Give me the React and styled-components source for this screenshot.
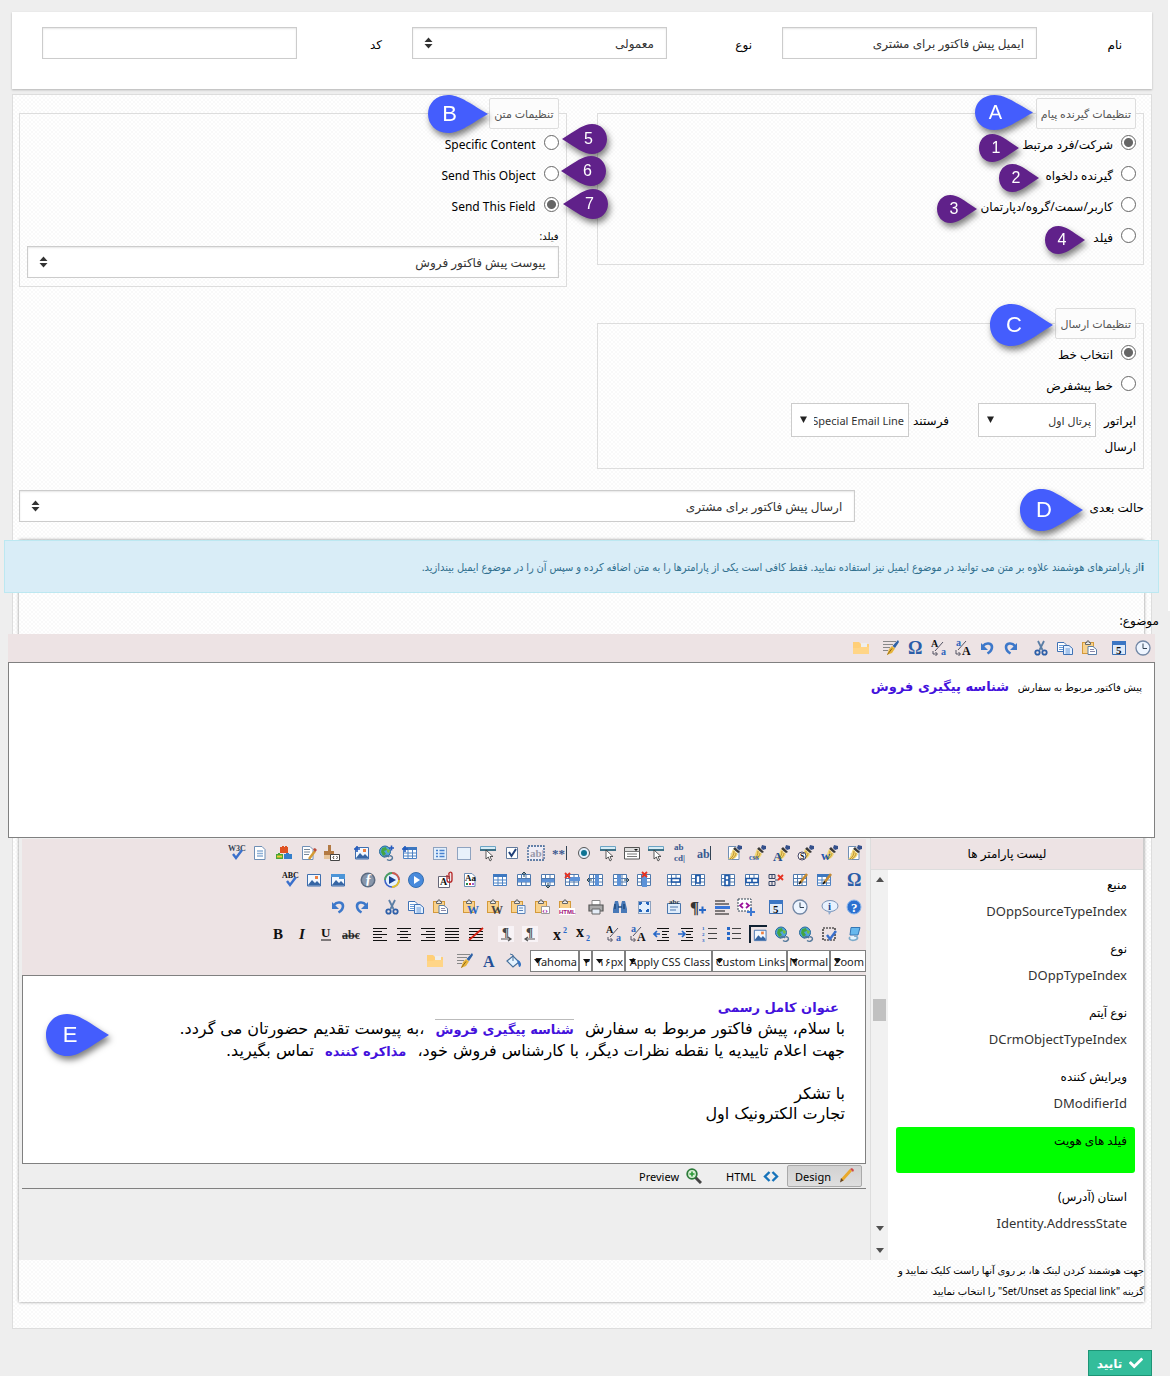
import React from "react";
import styled, { createGlobalStyle } from "styled-components";
import { FaCheck } from "react-icons/fa";

const UI = '"Noto Sans", "DejaVu Sans", sans-serif';
const NARROW = '"Noto Sans", "DejaVu Sans Condensed", "DejaVu Sans", sans-serif';
const DOC = '"DejaVu Sans", sans-serif';

const GlobalStyle = createGlobalStyle`
  *, *::before, *::after { box-sizing: border-box; }
  body { margin: 0; background: #fff; font-family: ${UI}; font-size: 12px; color: #000; }
  input, select, button { font-family: inherit; }
`;

const Page = styled.main`
  direction: rtl;
  padding: 12px 18px 0 12px;
  background: linear-gradient(#fff, #fff) right top / 2px 611px no-repeat, #eee;
`;

const TopCard = styled.section`
  display: grid;
  grid-template-columns: repeat(3, 1fr);
  padding: 15px 15px 30px;
  background: #fff;
  box-shadow: 0 1px 2px rgba(0, 0, 0, 0.25);
`;

const Field = styled.div`
  display: grid;
  grid-template-columns: 1fr 3fr;
  align-items: center;
  padding: 0 15px;
`;

const Label = styled.label`
  padding-top: 4px;
  font-size: 12px;
  line-height: 20px;
  color: #000;
`;

const TextBox = styled.input`
  width: 100%;
  height: 32px;
  padding: 0 12px;
  border: 1px solid #ccc;
  background: #fff;
  box-shadow: inset 0 1px 2px rgba(0, 0, 0, 0.1);
  color: #333;
  font-size: 12px;
`;

const SelectWrap = styled.div`
  position: relative;
  width: 100%;
  svg { position: absolute; left: ${(p) => (p.$plain ? 8 : 12)}px; top: 50%; margin-top: -6px; pointer-events: none; }
`;

const SelectBox = styled.select`
  appearance: none;
  display: block;
  width: 100%;
  height: ${(p) => (p.$plain ? 34 : 32)}px;
  padding: ${(p) => (p.$plain ? "0 4px 0 22px" : "0 12px 0 30px")};
  border: 1px solid #ccc;
  border-radius: 0;
  background: #fff;
  box-shadow: ${(p) => (p.$plain ? "none" : "inset 0 1px 2px rgba(0, 0, 0, 0.1)")};
  color: #333;
  font-size: ${(p) => (p.$plain ? 11 : 12)}px;
`;

const Panel = styled.section`
  margin-top: 5px;
  padding: 3px 7px 26px 6px;
  border: 1px solid #ddd;
  background: conic-gradient(#f9f9f9 25%, #fff 0 50%, #f9f9f9 0 75%, #fff 0) 0 0 / 4px 4px;
`;

const Columns = styled.div`
  display: grid;
  grid-template-columns: 1fr 1fr;
  align-items: start;
  gap: 21px 30px;
`;

const Group = styled.fieldset`
  position: relative;
  min-width: 0;
  margin: 0;
  padding: 0 7px ${(p) => p.$bottom || 8}px;
  border: 1px solid #ddd;
`;

const Legend = styled.legend`
  height: 31px;
  padding: 0 4px;
  border: 1px solid #ddd;
  border-radius: 2px;
  background: #fcfcfc;
  color: #555;
  font-size: 11px;
  line-height: 30px;
`;

const Choice = styled.label`
  display: flex;
  align-items: center;
  gap: 8px;
  height: 27px;
  margin-bottom: 4px;
  font-size: 12px;
  color: #000;
  span { padding-top: 4px; }
`;

const Radio = styled.input`
  appearance: none;
  width: 15px;
  height: 15px;
  margin: 0;
  border: 1px solid #666;
  border-radius: 50%;
  background: #fff;
  &:checked { background: radial-gradient(circle, #666 0 4px, #fff 5px); }
`;

const FieldLabel = styled.label`
  display: block;
  margin-top: 8px;
  font-size: 10px;
  line-height: 20px;
`;

const LineGrid = styled.div`
  display: flex;
  align-items: flex-start;
  margin-top: 6px;
`;

const LineField = styled.div`
  display: grid;
  grid-template-columns: 40px 118px;
  align-items: start;
  margin-left: 29px;
`;

const LineLabel = styled.label`
  padding-top: 5px;
  font-size: 12px;
  line-height: 26px;
`;

const NextState = styled.div`
  position: relative;
  display: grid;
  grid-template-columns: 1fr 3fr;
  align-items: center;
  gap: 10px;
  margin-top: 21px;
`;

const Marker = styled.span`
  position: absolute;
  z-index: 2;
  top: ${(p) => p.$top}px;
  ${(p) => (p.$left !== undefined ? `left: ${p.$left}px;` : `right: ${p.$right}px;`)}
  width: ${(p) => p.$w}px;
  height: ${(p) => p.$h}px;
  direction: ltr;
  color: #fff;
  font: ${(p) => p.$font}px "Liberation Sans", Roboto, sans-serif;
  filter: drop-shadow(2px 4px 3px rgba(0, 0, 0, 0.5));
  svg { position: absolute; inset: 0; width: 100%; height: 100%; }
  b {
    position: absolute;
    top: 0;
    ${(p) => (p.$flip ? "right: 0;" : "left: 0;")}
    width: ${(p) => p.$h + 6}px;
    line-height: ${(p) => p.$h}px;
    text-align: center;
    font-weight: 400;
  }
`;

const MessageBox = styled.section`
  margin-top: 18px;
  box-shadow: 0 0 3px rgba(0, 0, 0, 0.45);
`;

const Notice = styled.p`
  margin: 0 -15px;
  height: 53px;
  padding: 0 14px;
  border: 1px solid #bce8f1;
  background: #d9edf7;
  color: #31708f;
  font-family: ${NARROW};
  font-size: 11px;
  line-height: 51px;
  white-space: nowrap;
`;

const Subject = styled.div`
  margin: 0 -11px;
`;

const SubjectLabel = styled.div`
  margin-right: -4px;
  padding: 18px 0 3px;
  font-size: 12px;
  line-height: 20px;
`;

const Tools = styled.div`
  background: #ede3e4;
`;

const ToolRow = styled.div`
  display: flex;
  align-items: center;
  height: ${(p) => p.$h || 27}px;
`;

const ToolButton = styled.button`
  display: flex;
  align-items: center;
  justify-content: center;
  width: 24px;
  height: 24px;
  margin: 0 0 0 ${(p) => (p.$last ? 6 : 0)}px;
  padding: 0;
  border: 0;
  background: none;
  direction: ltr;
  svg { display: block; width: 16px; height: 16px; overflow: visible; }
`;

const SubjectArea = styled.div`
  height: 176px;
  padding: 13px 12px;
  border: 1px solid #808080;
  background: #fff;
  font-size: 10px;
  line-height: 22px;
`;

const Tag = styled.strong`
  display: inline-block;
  margin: 0 6px;
  color: #4412dc;
  font: bold 13px/20px ${DOC};
  ${(p) => p.$ruled && "border-top: 1px solid #bbb;"}
`;

const Workspace = styled.div`
  display: flex;
  height: 422px;
  background: #eee;
`;

const Params = styled.aside`
  flex: 0 0 274px;
  display: flex;
  flex-direction: column;
  border-left: 1px solid #ddd;
  border-right: 1px solid #ccc;
`;

const ParamsHead = styled.h2`
  margin: 1px 0 0;
  border-bottom: 1px solid #ddd;
  background: #ede3e4;
  font-size: 12px;
  font-weight: 400;
  line-height: 30px;
  text-align: center;
`;

const ParamsBody = styled.div`
  flex: 1;
  display: flex;
  background: #fff;
`;

const ParamList = styled.ul`
  flex: 1;
  margin: 0;
  padding: 1px 8px 0;
  list-style: none;
`;

const Param = styled.li`
  height: ${(p) => (p.$heading ? 46 : 52)}px;
  margin-bottom: ${(p) => (p.$heading ? 10 : 12)}px;
  padding: 0 8px;
  border-radius: 3px;
  background: ${(p) => (p.$heading ? "#0f0" : "transparent")};
  h3 { margin: 0; font-size: 12px; font-weight: 400; line-height: 28px; }
  code { display: block; color: #333; font-family: ${UI}; font-size: 13px; line-height: 24px; }
`;

const Track = styled.div`
  flex: 0 0 17px;
  display: flex;
  flex-direction: column;
  align-items: center;
  padding: 7px 0;
  background: #f1f1f1;
  svg { display: block; }
`;

const Thumb = styled.span`
  width: 13px;
  height: 22px;
  margin: 117px 0 auto;
  background: #c1c1c1;
`;

const Gap = styled.span`
  height: 17px;
`;

const Editor = styled.div`
  position: relative;
  flex: 1;
  min-width: 0;
  padding: 1px 4px 0 3px;
`;

const MiniWrap = styled.div`
  position: relative;
  width: ${(p) => p.$w}px;
  svg { position: absolute; left: 4px; top: 8px; pointer-events: none; }
`;

const MiniSelect = styled.select`
  appearance: none;
  display: block;
  width: 100%;
  height: 22px;
  padding: 0 1px;
  border: 1px solid #808080;
  border-radius: 0;
  background: #fff;
  color: #222;
  font-size: 11px;
`;

const Spacer = styled.span`
  width: 5px;
`;

const Doc = styled.div`
  height: 189px;
  padding: 20px;
  border: 1px solid #808080;
  background: #fff;
  font-family: ${DOC};
  font-size: 16px;
`;

const Line = styled.p`
  margin: 0;
  height: ${(p) => (p.$tight ? 20 : 22)}px;
  line-height: ${(p) => (p.$tight ? 20 : 22)}px;
  white-space: nowrap;
`;

const DocGap = styled.div`
  height: 22px;
`;

const Modes = styled.div`
  display: flex;
  align-items: center;
  height: 25px;
  padding-right: 4px;
  border-bottom: 1px solid #808080;
`;

const Mode = styled.button`
  display: flex;
  align-items: center;
  gap: 7px;
  height: 22px;
  margin: 0 0 0 ${(p) => (p.$on ? 0 : 8)}px;
  padding: 0 7px;
  border: 1px solid ${(p) => (p.$on ? "#aaa" : "transparent")};
  border-radius: 2px;
  background: ${(p) => (p.$on ? "linear-gradient(#d2d2d2, #dedede)" : "none")};
  color: #000;
  font-size: 11px;
`;

const Hint = styled.p`
  width: 252px;
  margin: 0;
  font-size: 10px;
  line-height: 21px;
`;

const Submit = styled.button`
  display: flex;
  align-items: center;
  justify-content: center;
  gap: 7px;
  width: 64px;
  height: 26px;
  margin: 21px 0 0;
  padding: 0;
  border: 1px solid #1d9576;
  background: #33bd9b;
  color: #fff;
  font-size: 12px;
  font-weight: 700;
`;

/* ---------- drawings ---------- */
const N = "#2d5a94";
const B = "#5c92d8";
const K = "#111";
const S = (d, c = N, w = 1, f = "none") => <path d={d} stroke={c} strokeWidth={w} fill={f} />;
const F = (d, c = N) => <path d={d} fill={c} />;
const T = (t, x, y, s, c = K, extra = {}) => (
  <text x={x} y={y} fontSize={s} fill={c} fontFamily="Liberation Serif, serif" {...extra}>{t}</text>
);
const bold = { fontWeight: 700 };
const G = (...kids) => <>{kids.map((k, i) => <React.Fragment key={i}>{k}</React.Fragment>)}</>;

const grid = () => S("M1.500 2.500H14.500V13.500H1.500ZM1.500 6.500H14.500M1.500 10H14.500M5.500 3V14M10 3V14", "#4f79ad", 1, "#fff");
const table = () => G(S("M1.500 2.500H14.500V13.500H1.500ZM1.500 8H14.500M1.500 11H14.500M6 5V13.500M10.500 5V13.500", "#4f83c4", 1, "#fff"), F("M1 2H15V5H1Z", "#3e78c0"));
const page = () => S("M2.500 1.500H10L13 4.500V14.500H2.500Z", "#6f8fb5", 1, "#fff");
const clip = () => G(F("M1 2H13V14H1Z", "#d49a3a"), F("M2 3H12V13H2Z", "#f9d28c"), S("M4.500 4.500V2.500H6V1H8V2.500H9.500V4.500Z", "#666", 1, "#eee"));
const picture = () => G(S("M1.500 2.500H14.500V14H1.500Z", "#3f6fae", 1, "#f2f8ff"), F("M2 13L6 8L9 11L11 9L14 12V13.500H2Z", "#3766a4"), F("M9 4H12V7H9Z", "#f08040"));
const globe = () => G(<circle cx="7" cy="6.500" r="5.500" fill="#4fa3dd" stroke="#256a9b" />, F("M4 3L8 2L9 5L6 6L8 9L5 11L3 7Z", "#45a543"), F("M9 4L12 5L11 8L9 7Z", "#70bf45"), S("M6 12.500C7 9.500 10 10.500 11 12M9 14.500C11 16 14 15.500 14.500 13C14.500 11 12.500 10.500 11.500 11", "#54789b", 1.400));
const brush = () => G(
  F("M12 0L16 1L16 4L13 5L11 3Z", "#34508c"),
  F("M9 2L14 7L12 8L7 4Z", "#3a3a3a"),
  F("M7 4L12 9C10 14 6 15 2 14C5 12 5 8 7 4Z", "#f1d778"),
  S("M8 6C8 9 7 12 4 14M10 8C10 10 8 13 6 14", "#b98a24", 0.900)
);
const pen = () => G(F("M15 0L16 2L12 8L9.500 6Z", "#2f62a6"), F("M9 6L12 8.500L9 13L4 15L6 9Z", "#e8b53b"), S("M9 8.500L4.500 14.500", "#825d13", 0.900));
const star = () => S("M0 4H6M3 1V7", "#2359bd", 1.600);
const cursor = () => G(S("M.5 1.500H15.500V5.500H.5Z", "#6ca4c5", 1, "#d8edf6"), F("M0 4H16V6H0Z", "#3f7186"), S("M6 5L6 14L8.300 12L10 16L11.500 15L10 11.500H13Z", "#333", 0.800, "#fff"));
const cross = () => S("M1 1L6 6M6 1L1 6", "#e63222", 1.800);
const lines = (xs, c = K) => S(xs, c, 1.100);
const check = () => S("M5 9L8 13L14 5", "#3a70cc", 2.400);
const undo = () => G(S("M4 6C7 2 13 3 13 7C13 10 11 12 8.500 13.500", "#3d78ca", 2.600), F("M2 3V10H9Z", "#3d78ca"));
const redo = () => <g transform="matrix(-1 0 0 1 16 0)">{undo()}</g>;
const omega = () => T("Ω", 1, 14, 18, "#2b5da8", bold);
const swap1 = () => G(T("A", 0, 7, 10, K, bold), T("a", 10, 15, 10, "#2d66bd", bold), S("M12 2L4 11M2 11V14H6M4.500 12L6.500 14L4.500 16", "#445", 0.900));
const swap2 = () => G(T("a", 1, 6, 10, "#2d66bd", bold), T("A", 7, 15, 12, K, bold), S("M11 1L3 10M1 10V14H5M3.500 12L5.500 14L3.500 16", "#445", 0.900));
const cut = () => G(S("M5 1L9.500 10M11 1L6.500 10", "#5b7ea5", 1.800), <circle cx="4.500" cy="12.500" r="2.200" fill="none" stroke="#2d5fa8" strokeWidth="1.800" />, <circle cx="11.500" cy="12.500" r="2.200" fill="none" stroke="#2d5fa8" strokeWidth="1.800" />);
const copy = () => G(S("M.5 2.500H7L9 4.500V11.500H.5Z", "#3f72b5", 1, "#fff"), S("M6.500 5.500H12L15.500 8.500V14.500H6.500Z", "#3f72b5", 1, "#e4f0ff"), S("M2 5.500H6M2 7.500H6M2 9.500H6M8.500 9H13M8.500 11H13M8.500 13H13", "#6a9bd8"));
const paste = () => G(clip(), S("M7 6.500H12L15.500 9.500V14.500H7Z", "#5a7fa8", 1, "#fff"), S("M9 9.500H13M9 11.500H14", "#88a"));
const clock = () => G(<circle cx="8" cy="8" r="7" fill="#eef5ff" stroke="#7287a5" strokeWidth="1.300" />, S("M8 3.500V8.500H12", "#345", 1));
const cal = () => G(S("M1.500 1.500H14.500V14.500H1.500Z", "#3b6fb3", 1, "#dfeaf8"), F("M1 1H15V5H1Z", "#3b76c4"), T("5", 5, 14, 11, K, bold));
const folder = () => G(F("M0 2H6L8 4H16V14H0Z", "#ffcf78"), F("M8 3H14V8H8Z", "#eee"), F("M0 8H6L8 7H16V14H0Z", "#ffd587"));
const format = () => G(S("M0 1.500H13M0 4.500H10M0 7.500H7M0 10.500H5", "#888"), pen());
const para = (d) => G(F("M0 0H16V16H0Z", "#f8f3f6"), T("¶", 4, 10, 13, "#444", bold), S(d, "#555", 1.200));
const tableMark = (d, c = "#2e68b8") => G(grid(), F(d, c));

const ICONS = {
  omega, undo, redo, cut, copy, paste, clock, cal, folder, format, swap1, swap2, pic: picture, table,
  w3c: () => G(T("W3C", 0, 6, 8, "#345", bold), check()),
  spell: () => G(T("ABC", 0, 6, 8, K, bold), check()),
  sheet: () => G(page(), S("M5 6H11M5 8.500H11M5 11H11", "#8eb0d5", 1.300)),
  modules: () => G(F("M4 2H6V1H8V2H9V1H11V2H12V8H4Z", "#df5222"), F("M0 9H2V8H4V9H7V14H0Z", "#49a637"), F("M8 9H10V8H13V9H16V14H8Z", "#347fcb"), S("M1 11.500H6", "#f3ca35", 2)),
  edit: () => G(page(), S("M4 4.500H10M4 7H10M4 9.500H9", "#789"), S("M15 6L9 14", "#d49b35", 2.500), F("M13 4L15 3L17 5L15 7Z", "#bb4b3a")),
  stamp: () => G(F("M4 0H7V6H10V10H0V6H4Z", "#b37a43"), F("M0 10H10V14H0Z", "#e6c49a"), S("M6.500 9.500H15.500V15.500H6.500ZM10 11L9 12.500L10 14M12.500 11L13.500 12.500L12.500 14", "#444", 1, "#fff")),
  picAdd: () => G(picture(), star()),
  globeAdd: () => G(globe(), S("M11 3H16M13.500 0.500V5.500", "#2359bd", 1.600)),
  tableAdd: () => G(table(), star()),
  formSet: () => G(<rect x="1.500" y="2.500" width="13" height="12" fill="#e2effc" stroke="#345d90" strokeDasharray="1 1" />, S("M4 5.500H6M4 8.500H6M4 11.500H6M7.500 5.500H12.500M7.500 8.500H12.500M7.500 11.500H12.500", "#4781ce", 1.500)),
  area: () => <rect x="1.500" y="2.500" width="13" height="12" fill="#e8f1fb" stroke="#345d90" strokeDasharray="1 1" />,
  cursor,
  checkbox: () => G(S("M2.500 2.500H13.500V13.500H2.500Z", "#627a9c", 1, "#fff"), S("M5 7L7.500 11L12 4", "#203f78", 2)),
  dashedText: () => G(<rect x="0" y="1" width="16" height="14" fill="#f0edf5" stroke="#345d90" strokeWidth="1.300" strokeDasharray="2 1" />, T("ab|", 2, 12, 11, "#99a", bold)),
  password: () => G(T("**", 0, 13, 13, "#3b5990", bold), S("M14.500 1V15", "#345")),
  radio: () => G(<circle cx="8" cy="8" r="5.500" fill="#e5f2ff" stroke="#555" />, <circle cx="8" cy="8" r="3" fill="#0f7494" />),
  list: () => G(S("M.5 2.500H15.500V14H.5Z", "#555", 1, "#fff"), F("M1 3H15V6H1Z", "#ddd"), S("M.5 6.500H15.500M3 9H13M3 11.500H13", "#777"), F("M10 4H14L12 6Z", K)),
  abcd: () => G(T("ab", 2, 5, 9, "#3b5990", bold), T("cd|", 2, 16, 9, "#3b5990", bold)),
  ab: () => G(T("ab", 1, 13, 12, "#3b5990", bold), S("M14.500 1V15", "#345")),
  br1: () => G(page(), S("M4.500 9H10M4.500 11.500H10", "#9ab"), brush()),
  br2: () => G(brush(), T("css", -1, 15, 8, "#345fae", bold)),
  br3: () => G(brush(), T("A", -1, 16, 13, "#274f91", bold)),
  br4: () => G(brush(), <circle cx="4" cy="11" r="4" fill="#fff" stroke="#446" />, T("S", 2, 14, 8, K, bold)),
  br5: () => G(brush(), T("w", -1, 15, 13, "#1e55ae", bold)),
  picMap: () => G(picture(), F("M1 2H15V7H9V5H1Z", "#4c95d8")),
  flash: () => G(<circle cx="8" cy="8" r="7.500" fill="#5c6b80" />, <circle cx="8" cy="8" r="6" fill="#8896aa" />, T("ƒ", 5, 12, 14, "#fff", bold)),
  media: () => G(<circle cx="8" cy="8" r="7" fill="#e5f2ff" stroke="#3c62c8" strokeWidth="1.600" />, S("M8 1A7 7 0 0 1 15 8", "#d05d4b", 1.800), S("M15 8A7 7 0 0 1 8 15", "#e6c228", 1.800), S("M1 8A7 7 0 0 1 8 1", "#4ca05a", 1.800), F("M5 4L12 8L5 12Z", "#173f90")),
  play: () => G(<circle cx="8" cy="8" r="7.500" fill="#488adc" stroke="#366fb1" />, F("M6 4L12 8L6 12Z", "#fff")),
  attach: () => G(S("M.5 4.500H11.500V15.500H.5Z", "#667", 1, "#fff"), T("A", 2, 13, 10, K, bold), S("M9 3V8C9 11 14 11 14 8V2C14-1 10 0 11 3V7", "#b52323", 1.300)),
  aa: () => G(page(), T("Aa", 3, 9, 9, K, bold), F("M4 11H6V13H4Z", "#258a46"), F("M7 11H9V13H7Z", "#c33"), F("M10 11H12V13H10Z", "#a25bd1")),
  rowUp: () => G(tableMark("M2 7H14V10H2Z", B), S("M8 0V5M6 2L8 0L10 2", "#245")),
  rowDown: () => G(tableMark("M2 7H14V10H2Z", B), S("M8 11V16M6 14L8 16L10 14", "#245")),
  rowDel: () => G(tableMark("M5 5H16V9H5Z", B), cross()),
  colL: () => G(tableMark("M7 3H11V14H7Z", B), S("M4 8H-1M1 6L-1 8L1 10", "#245")),
  colR: () => G(tableMark("M5 3H9V14H5Z", B), S("M12 8H17M15 6L17 8L15 10", "#245")),
  colDel: () => G(tableMark("M6 4H11V15H6Z", B), <g transform="translate(5 -1)">{cross()}</g>),
  cellA: () => G(grid(), S("M5.500 6.500H14V10H5.500Z", "#1d57a6", 1.600, "#fff")),
  cellB: () => G(grid(), S("M6 3.500H10V11H6Z", "#1d57a6", 1.600, "#fff")),
  cellC: () => G(grid(), S("M5 3.500H9V13.500H5ZM5 8H9", "#1d57a6", 1.600, "#fff")),
  cellD: () => G(grid(), S("M2 6.500H14V10.500H2ZM8 6V10", "#1d57a6", 1.600, "#fff")),
  cellDel: () => G(S("M1 2.500H7V6.500H1ZM1 9.500H7V13.500H1ZM7 8H10M4 2V6M4 9V13", "#346"), <g transform="translate(9 2)">{cross()}</g>),
  gridPen: () => G(grid(), S("M15 2L8 11", "#c58a32", 2.600), S("M9 9.500L7 12", K, 1.500)),
  tablePen: () => G(table(), S("M15 2L8 11", "#c58a32", 2.600), S("M9 9.500L7 12", K, 1.500)),
  pasteW: () => G(clip(), T("W", 5, 15, 12, "#2866c4", bold)),
  pasteK: () => G(clip(), T("W", 5, 15, 12, "#444", bold)),
  pasteT: () => G(clip(), S("M7.500 6.500H15V14.500H7.500ZM9 9H13M9 11.500H13", "#5b83b8", 1, "#eef6ff")),
  pasteC: () => G(clip(), S("M7.500 7.500H15.500V14.500H7.500Z", "#999", 1, "#fff"), T("‹›", 8, 14, 9, "#a020a0", bold)),
  pasteH: () => G(clip(), F("M1 9H17V16H1Z", "#fff"), T("HTML", 1, 15, 6, "#a00f78", { fontWeight: 700, fontFamily: "Liberation Sans" })),
  print: () => G(S("M4 1.500H12V6H4Z", "#888", 1, "#fff"), S("M1 6H15V12H1Z", "#555", 1.200, "#aaa"), S("M4 10H12V15H4Z", "#666", 1, "#e5edf7")),
  find: () => G(F("M3 2H6L7 6L7 14H1V10Z", "#4879b8"), F("M10 2H13L15 10V14H9V6Z", "#4879b8"), S("M3 5V10M12 5V10M6 8H10", "#234d80", 1.600)),
  full: () => G(<rect x="2.500" y="2.500" width="12" height="12" fill="#e2effc" stroke="#345d90" strokeDasharray="1 1" />, S("M4 6V4H6M10 4H12V6M12 10V12H10M6 12H4V10", "#2263bb", 2)),
  note: () => G(S("M1.500 4.500H14.500V14.500H1.500ZM4 8H12M4 11H10", "#4a76ad", 1, "#e0edfb"), T("abc", 3, 5, 7, "#234", bold)),
  paraAdd: () => G(T("¶", 0, 14, 17, "#333", bold), S("M9 11H16M12.500 7.500V14.500", "#2768c8", 2)),
  hr: () => G(lines("M1 2H11M1 5H15M1 12H11M1 15H15"), S("M1 8.500H16", "#3a76d8", 3)),
  code: () => G(<rect x="0" y="0" width="13" height="12" fill="#fff" stroke="#345" strokeDasharray="2 1" />, S("M5 4L2 6.500L5 9M8 4L11 6.500L8 9", "#9b149b", 1.700), S("M9 13H17M13 9V17", "#3d78d2", 2)),
  info: () => G(<ellipse cx="8" cy="7" rx="8" ry="5.500" fill="#e8f2ff" stroke="#7992b5" />, F("M6 12L7 16L10 12Z", "#8fa9cc"), T("i", 6, 11, 11, "#234c92", bold)),
  help: () => G(<circle cx="8" cy="8" r="7" fill="#2b70d0" stroke="#8eb8ec" />, T("?", 5, 13, 13, "#fff", bold)),
  b: () => T("B", 3, 13, 15, K, bold),
  i: () => T("I", 5, 13, 15, K, { fontStyle: "italic", fontWeight: 700 }),
  u: () => G(T("U", 3, 11, 13, K, bold), S("M3 14H13", K)),
  s: () => G(T("abc", 0, 13, 12, "#333", bold), S("M0 10H17", K)),
  al: () => lines("M1 2.500H15M1 5.500H10M1 8.500H15M1 11.500H10M1 14.500H15"),
  ac: () => lines("M1 2.500H15M4 5.500H12M1 8.500H15M4 11.500H12M1 14.500H15"),
  ar: () => lines("M1 2.500H15M6 5.500H15M1 8.500H15M6 11.500H15M1 14.500H15"),
  aj: () => lines("M1 2.500H15M1 5.500H15M1 8.500H15M1 11.500H15M1 14.500H15"),
  an: () => G(lines("M1 2.500H15M1 5.500H15M1 8.500H15M1 11.500H15M1 14.500H15"), S("M15 2L1 14", "#d81f10", 1.700)),
  ltr: () => para("M3 13H13M10 11L13 13L10 15"),
  rtl: () => para("M3 13H13M6 11L3 13L6 15"),
  sup: () => G(T("x", 1, 14, 16, K, bold), T("2", 11, 7, 8, "#2768c8", bold)),
  sub: () => G(T("x", 0, 11, 16, K, bold), T("2", 10, 15, 8, "#2768c8", bold)),
  out: () => G(lines("M3 2.500H15M8 5.500H15M8 8.500H13M8 11.500H15M3 14.500H15"), S("M0 8H6M3 5L0 8L3 11", "#2768c8", 1.700)),
  ind: () => G(lines("M3 2.500H15M8 5.500H15M8 8.500H13M8 11.500H15M3 14.500H15"), S("M0 8H6M4 5L7 8L4 11", "#2768c8", 1.700)),
  ol: () => G(lines("M6 2.500H15M6 7.500H15M6 12.500H15", "#444"), T("1", 0, 4, 5, "#2768c8", bold), T("2", 0, 10, 5, "#2768c8", bold), T("3", 0, 16, 5, "#2768c8", bold)),
  ul: () => G(lines("M6 2.500H15M6 7.500H15M6 12.500H15", "#444"), F("M1 1H4V4H1ZM1 6H4V9H1ZM1 11H4V14H1Z", "#2768c8")),
  frame: () => G(S("M0 17V0H17", "#123", 2), <g transform="translate(3 2) scale(.9)">{picture()}</g>),
  globe,
  select: () => G(<rect x="1" y="2" width="12" height="12" fill="none" stroke={K} strokeWidth="1.200" strokeDasharray="2 1" />, check()),
  screen: () => G(S("M5 1.500H14L12 9H4Z", "#3477b5", 1, "#67b8ed"), S("M4 11C2 13 5 15 9 14C13 13 12 10 8 10", "#7caaca", 1.700, "#e5f5ff")),
  font: () => T("A", 2, 14, 16, "#244f96", bold),
  bucket: () => G(S("M2 8L8 3L14 9L8 14Z", "#456f9b", 1.200, "#e6f4ff"), S("M8 8V2L5 1", "#456f9b"), F("M12 7C17 8 17 14 14 14Z", "#3674c2")),
};

const TOP_TOOLS = ["clock cal", "paste copy cut", "redo undo swap2 swap1 omega format", "folder"];
const TOOL_ROWS = [
  ["br1 br5 br4 br3 br2 br1", "ab abcd cursor list cursor radio password dashedText checkbox cursor area formSet", "tableAdd globeAdd picAdd", "stamp edit modules sheet w3c"],
  ["omega", "tablePen gridPen cellDel cellD cellC", "cellB cellA", "colDel colR colL rowDel rowDown rowUp table", "aa attach", "play media flash", "picMap pic spell"],
  ["help info", "clock cal", "code hr paraAdd note", "full find print", "pasteH pasteC pasteT pasteK pasteW", "paste copy cut", "redo undo"],
  ["screen select globe globe frame ul ol ind out swap2 swap1", "sub sup", "rtl ltr", "an aj ar ac al", "s u i b"],
];
const LAST_TOOLS = ["bucket font format", "folder"];
const MINI = [["Zoom", 36], ["Normal", 43], ["Custom Links", 75], ["Apply CSS Class", 87], ["۱۶px", 33], ["۳", 13], ["Tahoma", 49]];

const Icon = ({ name }) => <svg viewBox="0 0 16 16" aria-hidden="true">{ICONS[name]()}</svg>;

const ToolGroups = ({ groups }) =>
  groups.map((g, gi) => {
    const names = g.split(" ");
    return names.map((n, i) => (
      <ToolButton key={`${gi}-${i}`} type="button" aria-label={n} $last={i === names.length - 1}><Icon name={n} /></ToolButton>
    ));
  });

const PURPLE = "#60218a";
const Pin = ({ text, flip, color = "#445dfd", ...pos }) => (
  <Marker $flip={flip} {...pos}>
    <svg viewBox="0 0 60 40" preserveAspectRatio="none" aria-hidden="true">
      <path
        transform={flip ? "matrix(-1 0 0 1 60 0)" : undefined}
        d="M20 0C31 0 39 7 60 20C39 33 31 40 20 40C8 40 0 31 0 20C0 9 8 0 20 0Z"
        fill={color}
      />
    </svg>
    <b>{text}</b>
  </Marker>
);

const Sorter = () => (
  <svg width="9" height="12" viewBox="0 0 9 12" aria-hidden="true"><path d="M0.500 5L4.500 0.500L8.500 5ZM0.500 7L4.500 11.500L8.500 7Z" fill="#333" /></svg>
);
const Down = () => (
  <svg width="9" height="12" viewBox="0 0 9 12" aria-hidden="true"><path d="M1 2.500H8L4.500 9Z" fill="#222" /></svg>
);
const Arrow = ({ up }) => (
  <svg width="8" height="5" viewBox="0 0 8 5" aria-hidden="true"><path d={up ? "M0 5L4 0L8 5Z" : "M0 0L4 5L8 0Z"} fill="#505050" /></svg>
);

const Select = ({ id, value, plain }) => (
  <SelectWrap $plain={plain}>
    <SelectBox id={id} $plain={plain} defaultValue={value}><option>{value}</option></SelectBox>
    {plain ? <Down /> : <Sorter />}
  </SelectWrap>
);

const Option = ({ name, text, on }) => (
  <Choice><Radio type="radio" name={name} defaultChecked={on} /><span>{text}</span></Choice>
);

const PARAMS = [
  ["منبع", "DOppSourceTypeIndex"], ["نوع", "DOppTypeIndex"], ["نوع آیتم", "DCrmObjectTypeIndex"],
  ["ویرایش کننده", "DModifierId"], ["فیلد های هویت", null], ["استان (آدرس)", "Identity.AddressState"],
];

export default function App() {
  return (
    <Page dir="rtl" lang="fa">
      <GlobalStyle />
      <TopCard>
        <Field><Label htmlFor="name">نام</Label><TextBox id="name" defaultValue="ایمیل پیش فاکتور برای مشتری" /></Field>
        <Field><Label htmlFor="kind">نوع</Label><Select id="kind" value="معمولی" /></Field>
        <Field><Label htmlFor="code">کد</Label><TextBox id="code" /></Field>
      </TopCard>

      <Panel>
        <Columns>
          <Group $bottom={11}>
            <Legend>تنظیمات گیرنده پیام</Legend>
            <Option name="to" text="شرکت/فرد مرتبط" on />
            <Option name="to" text="گیرنده دلخواه" />
            <Option name="to" text="کاربر/سمت/گروه/دپارتمان" />
            <Option name="to" text="فیلد" />
            <Pin text="A" $right={110} $top={-34} $w={58} $h={35} $font={20} />
            <Pin text="1" color={PURPLE} $right={124} $top={5} $w={40} $h={28} $font={16} />
            <Pin text="2" color={PURPLE} $right={104} $top={35} $w={40} $h={28} $font={16} />
            <Pin text="3" color={PURPLE} $right={166} $top={66} $w={40} $h={28} $font={16} />
            <Pin text="4" color={PURPLE} $right={58} $top={97} $w={40} $h={28} $font={16} />
          </Group>
          <Group>
            <Legend>تنظیمات متن</Legend>
            <Option name="body" text="Specific Content" />
            <Option name="body" text="Send This Object" />
            <Option name="body" text="Send This Field" on />
            <FieldLabel htmlFor="field">فیلد:</FieldLabel>
            <Select id="field" value="پیوست پیش فاکتور فروش" />
            <Pin text="B" $right={78} $top={-34} $w={60} $h={38} $font={22} />
            <Pin text="5" flip color={PURPLE} $right={-41} $top={-5} $w={45} $h={30} $font={16} />
            <Pin text="6" flip color={PURPLE} $right={-40} $top={27} $w={45} $h={30} $font={16} />
            <Pin text="7" flip color={PURPLE} $right={-42} $top={60} $w={45} $h={30} $font={16} />
          </Group>
          <Group>
            <Legend>تنظیمات ارسال</Legend>
            <Option name="line" text="انتخاب خط" on />
            <Option name="line" text="خط پیشفرض" />
            <LineGrid>
              <LineField><LineLabel htmlFor="operator">اپراتور ارسال</LineLabel><Select id="operator" value="پرتال اول" plain /></LineField>
              <LineField><LineLabel htmlFor="sender">فرستند</LineLabel><Select id="sender" value="Special Email Line" plain /></LineField>
            </LineGrid>
            <Pin text="C" $right={90} $top={-35} $w={63} $h={42} $font={22} />
          </Group>
        </Columns>

        <NextState>
          <Label htmlFor="next">حالت بعدی</Label>
          <Select id="next" value="ارسال پیش فاکتور برای مشتری" />
          <Pin text="D" $right={61} $top={-1} $w={63} $h={42} $font={22} />
        </NextState>

        <MessageBox>
          <Notice><b>ℹ</b>از پارامترهای هوشمند علاوه بر متن می توانید در موضوع ایمیل نیز استفاده نمایید. فقط کافی است یکی از پارامترها را به متن اضافه کرده و سپس آن را در موضوع ایمیل بیندازید.</Notice>
          <Subject>
            <SubjectLabel>موضوع:</SubjectLabel>
            <Tools><ToolRow $h={28}><ToolGroups groups={TOP_TOOLS} /></ToolRow></Tools>
            <SubjectArea role="textbox" aria-label="موضوع">پیش فاکتور مربوط به سفارش <Tag>شناسه پیگیری فروش</Tag></SubjectArea>
          </Subject>

          <Workspace>
            <Params>
              <ParamsHead>لیست پارامتر ها</ParamsHead>
              <ParamsBody>
                <ParamList>
                  {PARAMS.map(([title, code]) => (
                    <Param key={title} $heading={!code}>
                      <h3>{title}</h3>
                      {code && <code>{code}</code>}
                    </Param>
                  ))}
                </ParamList>
                <Track><Arrow up /><Thumb /><Arrow /><Gap /><Arrow /></Track>
              </ParamsBody>
            </Params>

            <Editor>
              <Tools>
                {TOOL_ROWS.map((groups, i) => <ToolRow key={i}><ToolGroups groups={groups} /></ToolRow>)}
                <ToolRow $h={28}>
                  {MINI.map(([text, w]) => (
                    <MiniWrap key={text} $w={w}>
                      <MiniSelect aria-label={text} defaultValue={text}><option>{text}</option></MiniSelect>
                      <svg width="7" height="6" viewBox="0 0 7 6" aria-hidden="true"><path d="M0 1H7L3.500 5.500Z" fill="#111" /></svg>
                    </MiniWrap>
                  ))}
                  <Spacer />
                  <ToolGroups groups={LAST_TOOLS} />
                </ToolRow>
              </Tools>
              <Doc role="textbox" aria-label="متن ایمیل">
                <Line><Tag>عنوان کامل رسمی</Tag></Line>
                <Line>با سلام، پیش فاکتور مربوط به سفارش <Tag $ruled>شناسه پیگیری فروش</Tag> ،به پیوست تقدیم حضورتان می گردد.</Line>
                <Line>جهت اعلام تاییدیه یا نقطه نظرات دیگر، با کارشناس فروش خود، <Tag>مذاکره کننده</Tag> تماس بگیرید.</Line>
                <DocGap />
                <Line $tight>با تشکر</Line>
                <Line $tight>تجارت الکترونیک اول</Line>
              </Doc>
              <Pin text="E" $left={27} $top={176} $w={63} $h={42} $font={22} />
              <Modes>
                <Mode type="button" $on><svg width="16" height="16" viewBox="0 0 16 16" aria-hidden="true"><path d="M13 2L4 12" stroke="#e9a92c" strokeWidth="3" /><path d="M12 1L14 0L16 2L15 4Z" fill="#cf4a4a" /><path d="M3 10L5.500 12.500L2 14.500Z" fill="#6a4720" /></svg>Design</Mode>
                <Mode type="button"><svg width="16" height="16" viewBox="0 0 16 16" aria-hidden="true"><path d="M6.500 4L2 8.500L6.500 13M9.500 4L14 8.500L9.500 13" fill="none" stroke="#1673ba" strokeWidth="2.400" /></svg>HTML</Mode>
                <Mode type="button"><svg width="16" height="16" viewBox="0 0 16 16" aria-hidden="true"><path d="M9 9L15 15" stroke="#444" strokeWidth="3" /><circle cx="6" cy="6" r="4.800" fill="#d9f0d6" stroke="#2d7b3a" strokeWidth="1.800" /><path d="M3.500 6H8.500M6 3.500V8.500" stroke="#2d9a3a" strokeWidth="1.600" /></svg>Preview</Mode>
              </Modes>
            </Editor>
          </Workspace>
          <Hint>جهت هوشمند کردن لینک ها، بر روی آنها راست کلیک نمایید و گزینه "Set/Unset as Special link" را انتخاب نمایید</Hint>
        </MessageBox>
      </Panel>

      <Submit type="submit"><FaCheck size={14} />تایید</Submit>
    </Page>
  );
}
